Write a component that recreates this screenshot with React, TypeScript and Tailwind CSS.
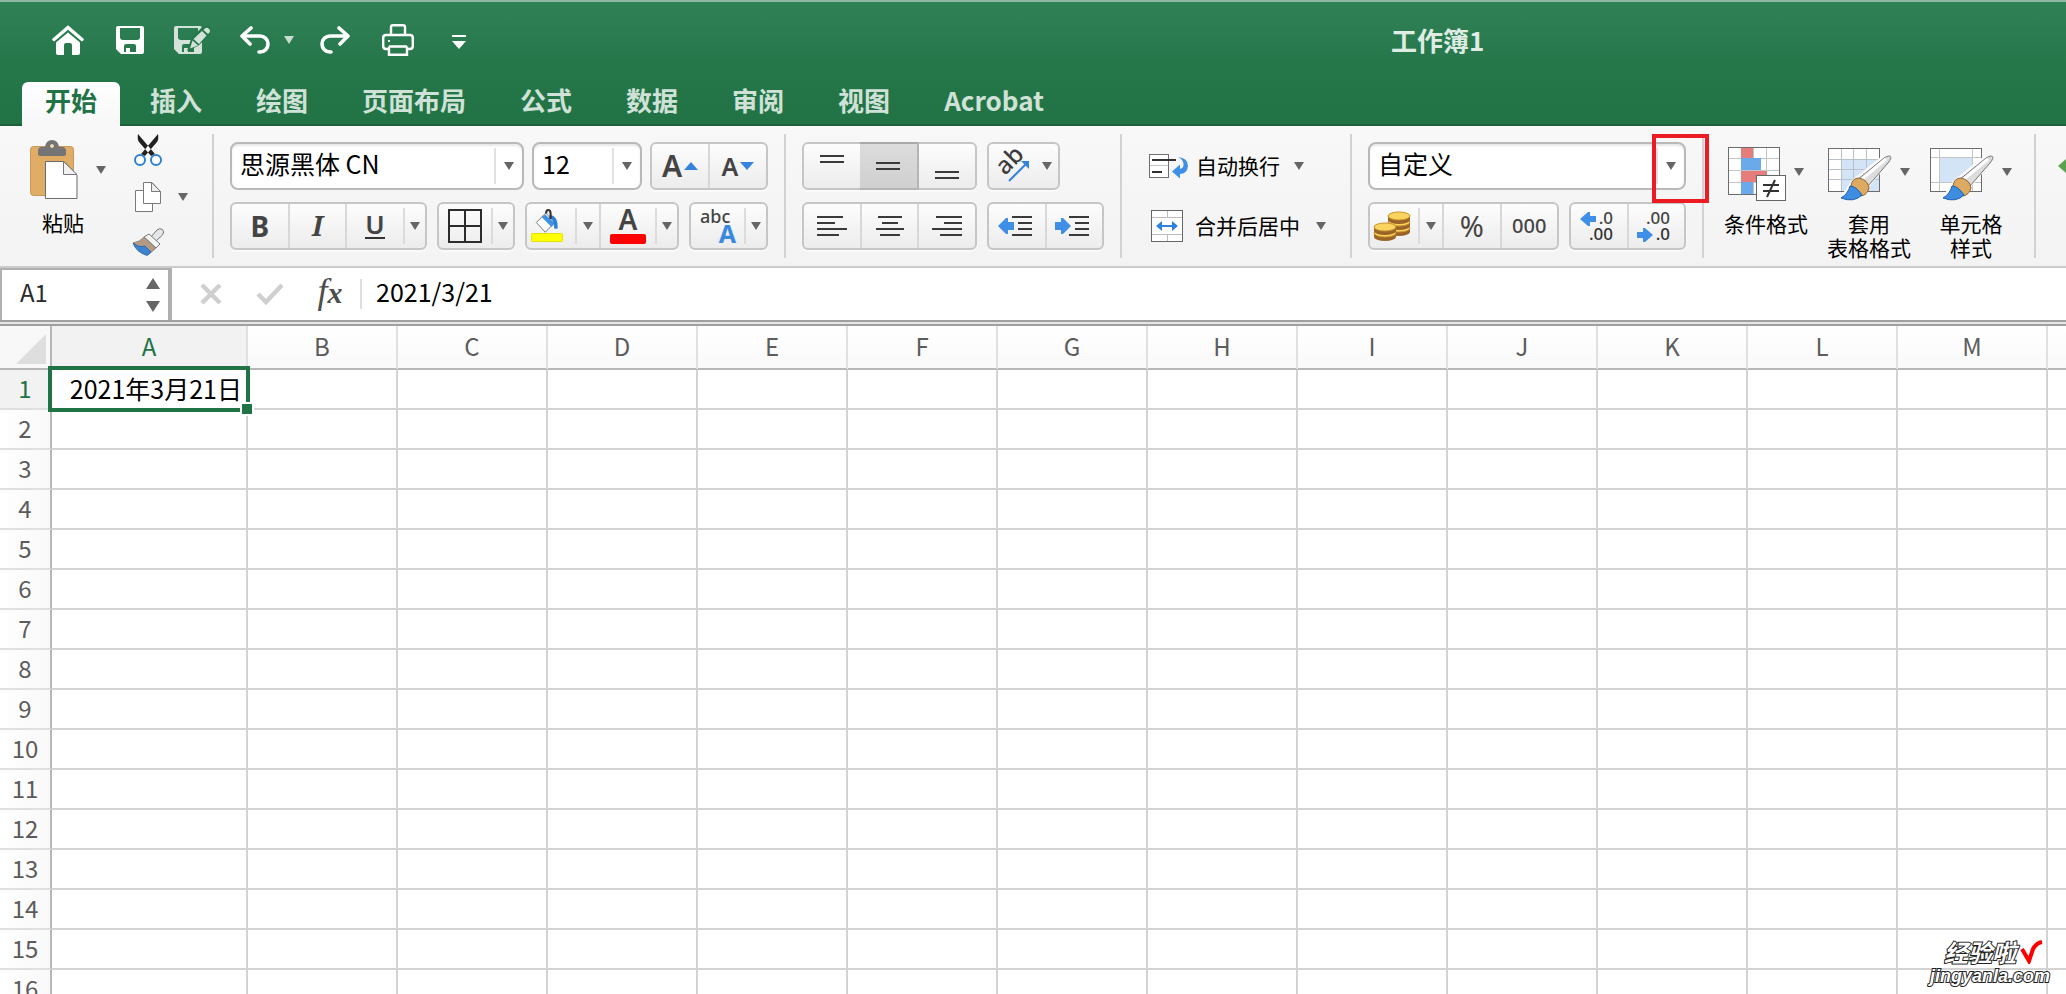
import type { ReactNode } from "react"
import clsx from "clsx"

const COLUMNS = ["A", "B", "C", "D", "E", "F", "G", "H", "I", "J", "K", "L", "M", "N"]
const ROWS = Array.from({ length: 16 }, (_, i) => i + 1)
const TABS = ["插入", "绘图", "页面布局", "公式", "数据", "审阅", "视图", "Acrobat"]

/* ---------- shared bits ---------- */

function Caret({ className = "" }: { className?: string }) {
  return (
    <svg viewBox="0 0 10 8" className={clsx("h-2 w-2.5 shrink-0", className || "text-[#666666]")} aria-hidden="true">
      <path d="M0 0H10L5 8Z" fill="currentColor" />
    </svg>
  )
}

function Divider() {
  return <div className="mt-2 h-[124px] w-0.5 shrink-0 bg-[#d2d2d2]" />
}

function Group({ className, children }: { className?: string; children: ReactNode }) {
  return (
    <div
      className={clsx(
        "flex h-12 shrink-0 rounded-md border-2 border-[#c6c6c6] bg-linear-to-b from-[#fdfdfd] to-[#ececec] shadow-[0_2px_1px_#fafafa]",
        className
      )}
    >
      {children}
    </div>
  )
}

interface SegProps {
  label: string
  className?: string
  line?: boolean
  pressed?: boolean
  children: ReactNode
}

function Seg({ label, className = "flex-1", line, pressed, children }: SegProps) {
  return (
    <button
      type="button"
      aria-label={label}
      aria-pressed={pressed}
      className={clsx(
        "flex items-center justify-center text-[#444444]",
        line && "border-l-2 border-[#d8d8d8]",
        pressed && "-my-0.5 border-y-2 border-r-2 border-t-[#a9a9a9] border-r-[#b5b5b5] border-b-[#b5b5b5] bg-linear-to-b from-[#dcdcdc] to-[#d0d0d0]",
        className
      )}
    >
      {children}
    </button>
  )
}

// narrow drop-down part of a split button, with its short rule
function SplitArrow({ label, className = "w-[22px]" }: { label: string; className?: string }) {
  return (
    <button type="button" aria-label={label} className={clsx("flex shrink-0 items-center", className)}>
      <span className="h-9 w-0.5 bg-[#dcdcdc]" />
      <span className="flex flex-1 justify-center">
        <Caret />
      </span>
    </button>
  )
}

interface ComboProps {
  label: string
  value: string
  className: string
  children?: ReactNode
}

function Combo({ label, value, className, children }: ComboProps) {
  return (
    <div className={clsx("relative h-12 shrink-0", className)}>
      <select
        aria-label={label}
        defaultValue={value}
        className="h-12 w-full appearance-none rounded-lg border-2 border-[#b9b9b9] bg-white pb-1.5 pl-2 text-[25px] leading-9 text-black shadow-[inset_0_2px_2px_#e8e8e8]"
      >
        <option>{value}</option>
      </select>
      <span className="pointer-events-none absolute inset-y-0 right-0 flex w-[30px] items-center">
        <span className="h-9 w-0.5 bg-[#e2e2e2]" />
        <span className="flex flex-1 justify-center pr-0.5">
          <Caret />
        </span>
      </span>
      {children}
    </div>
  )
}

/* ---------- title bar icons ---------- */

const FLOPPY =
  "M2 0H26Q28 0 28 2V26Q28 28 26 28H5L0 23V2Q0 0 2 0ZM4 2V11Q4 14 7 14H21Q24 14 24 11V2ZM8 26V20Q8 18 10 18H18Q20 18 20 20V26H14V22H10V26Z"

function HomeIcon() {
  return (
    <svg viewBox="0 0 32 30" className="h-[30px] w-8">
      <path d="M2 14.5L16 2.5L30 14.5" fill="none" stroke="#fff" strokeWidth="3.4" strokeLinecap="round" />
      <path d="M4 17.5L16 7.5L28 17.5V28Q28 30 26 30H20V20Q20 18 18 18H14Q12 18 12 20V30H6Q4 30 4 28Z" fill="#fff" />
    </svg>
  )
}

function SaveIcon() {
  return (
    <svg viewBox="0 0 28 28" className="size-7">
      <path d={FLOPPY} fill="#fff" fillRule="evenodd" />
    </svg>
  )
}

function SaveEditIcon() {
  return (
    <svg viewBox="0 0 36 28" className="h-7 w-9">
      <path d={FLOPPY} fill="#d3e3d9" fillRule="evenodd" />
      <path d="M13 25L17 13L29 0H38V7L24 20Z" fill="#27784a" />
      <path d="M16 22.500L18.500 14.500L24 19.500Z" fill="#d3e3d9" />
      <path d="M19.500 13L28 5L32.500 9.500L25 18Z" fill="#d3e3d9" />
      <path d="M29.500 4L31 2.500Q33 1 35 3T35 7L34 8Z" fill="#d3e3d9" />
    </svg>
  )
}

function UndoIcon({ flip }: { flip?: boolean }) {
  return (
    <svg viewBox="0 0 30 28" className={clsx("h-7 w-[30px]", flip && "-scale-x-100")}>
      <path
        d="M11 2L2 10L10 18M3 10H20A8 8 0 0 1 20 26H19"
        fill="none"
        stroke="#fff"
        strokeWidth="3.6"
        strokeLinecap="round"
        strokeLinejoin="round"
      />
    </svg>
  )
}

function PrintIcon() {
  return (
    <svg viewBox="0 0 32 32" className="size-8" fill="none" stroke="#fff" strokeWidth="2.4">
      <path d="M9 11V3Q9 1.200 11 1.200H21Q23 1.200 23 3V11" />
      <path d="M7 25H4Q1.200 25 1.200 22V14Q1.200 11 4 11H28Q30.800 11 30.800 14V22Q30.800 25 28 25H25" />
      <path d="M7 22.500H25M7 22.500V30.800H25V22.500" />
      <path d="M6 17H8" strokeWidth="2" />
    </svg>
  )
}

/* ---------- ribbon icons ---------- */

function PasteIcon() {
  return (
    <svg viewBox="0 0 48 60" className="h-[60px] w-12">
      <rect x="0.500" y="6.500" width="43" height="49" rx="3" fill="#e0ad66" stroke="#c8965a" />
      <path d="M8 11Q8 7 12 7H15Q16 0 22 0T29 7H32Q36 7 36 11V14Q36 16 33 16H11Q8 16 8 14Z" fill="#757575" />
      <circle cx="22" cy="6" r="2.500" fill="#f1d9b5" stroke="#666" />
      <path d="M15.500 21.500H34L47 35V58.500H15.500Z" fill="#fff" stroke="#6b6b6b" />
      <path d="M33.500 21.500V34.500H47Z" fill="#f1f1f1" stroke="#777" />
    </svg>
  )
}

function CutIcon() {
  return (
    <svg viewBox="0 0 28 32" className="h-8 w-7">
      <path d="M4 0Q3 5 5 8L17 22L21 20ZM24 0Q25 5 23 8L11 22L7 20Z" fill="#222" />
      <circle cx="6" cy="26" r="5" fill="#fff" stroke="#2f7fd6" strokeWidth="2" />
      <circle cx="22" cy="26" r="5" fill="#fff" stroke="#2f7fd6" strokeWidth="2" />
    </svg>
  )
}

function CopyIcon() {
  return (
    <svg viewBox="0 0 28 30" className="h-[30px] w-7" fill="#fff" stroke="#7a7a7a">
      <path d="M1.500 8.500H18.500V29.500H1.500Z" />
      <path d="M9.500 0.500H18L26.500 9.500V21.500H9.500Z" />
      <path d="M17.500 0.500V9.500H26.500Z" fill="#eee" />
    </svg>
  )
}

function FormatPainterIcon() {
  return (
    <svg viewBox="0 0 32 28" className="h-7 w-8">
      <path d="M19 9L25 2Q28 -0.500 30.500 1.500T30.500 7L24 13Z" fill="#e6e6e6" stroke="#777" />
      <path d="M12 9L17 6L28 16L24 20Z" fill="#f4f4f4" stroke="#777" />
      <path d="M12 9L24 20L16 27L1 15Q8 14 12 9Z" fill="#b29a84" stroke="#777" strokeWidth="0.800" />
      <path d="M1 15Q7 20 13 18Q17 22 19 24L15 27.500Q4 24 1 15Z" fill="#3b82d0" stroke="#2461a5" strokeWidth="0.800" />
    </svg>
  )
}

function FillIcon() {
  return (
    <svg viewBox="0 0 36 40" className="h-10 w-9">
      <path d="M16.500 5.500L27 16L16 27L6 16Z" fill="#fff" stroke="#6a6a6a" />
      <path d="M12 10L16 7L27 17L23 21Z" fill="#4391e4" />
      <path d="M21 9Q29 11 28 23" fill="none" stroke="#2f7fd6" strokeWidth="4" />
      <path d="M17 6Q17 2 19.500 2T22 6V12" fill="none" stroke="#333" strokeWidth="2.400" />
      <rect x="0.500" y="28.500" width="35" height="9" rx="1" fill="#ffff00" stroke="#dede00" />
    </svg>
  )
}

function BordersIcon() {
  return (
    <svg viewBox="0 0 34 34" className="size-[34px]">
      <path d="M1 1H33V33H1ZM17 1V33M1 17H33" fill="none" stroke="#2c2c2c" strokeWidth="2" />
    </svg>
  )
}

function Lines({ d, size = "h-[22px] w-[30px]", box = "0 0 30 22" }: { d: string; size?: string; box?: string }) {
  return (
    <svg viewBox={box} className={size}>
      <path d={d} fill="none" stroke="#3a3a3a" strokeWidth="2" />
    </svg>
  )
}

function IndentIcon({ increase }: { increase?: boolean }) {
  return (
    <svg viewBox="0 0 34 22" className="h-[22px] w-[34px]">
      <path d="M14 2H34M20 8H34M20 14H34M14 20H34" stroke="#3a3a3a" strokeWidth="2" />
      <path
        d={increase ? "M0 7H6V3L8 3L16 11L8 19H6V15H0Z" : "M16 7H10V3H8L0 11L8 19H10V15H16Z"}
        fill="#3f8fe6"
      />
    </svg>
  )
}

function OrientationIcon() {
  return (
    <svg viewBox="0 0 36 34" className="h-[34px] w-9 overflow-visible">
      <text
        x="0"
        y="0"
        transform="translate(9 27) rotate(-45)"
        fontSize="24"
        fontFamily="Noto Sans"
        fontWeight="500"
        fill="#3c3c3c"
      >
        ab
      </text>
      <path d="M13 32L30 15" stroke="#3583dc" strokeWidth="2" />
      <path d="M25 12H33V20Z" fill="#3583dc" />
    </svg>
  )
}

function WrapIcon() {
  return (
    <svg viewBox="0 0 40 26" className="h-[26px] w-10">
      <rect x="0.500" y="1.500" width="19" height="23" fill="#fff" stroke="#6e6e6e" />
      <path d="M1 12.500H19" stroke="#c4c4c4" />
      <path d="M3 7H27M3 19H13" stroke="#333" strokeWidth="2" />
      <path d="M29 4Q39 5 39 13Q38 21 31 21V25.500L23 18.500L31 11.500V16Q35 15 34.500 11Q34 6 29 4Z" fill="#3f8fe6" />
    </svg>
  )
}

function MergeIcon() {
  return (
    <svg viewBox="0 0 32 32" className="size-8">
      <rect x="0.500" y="0.500" width="31" height="31" fill="#fff" stroke="#666" />
      <path d="M1 7.500H31M1 24.500H31M16.500 1V7M16.500 25V31" stroke="#bdbdbd" />
      <path d="M5 16L11 11V15H21V11L27 16L21 21V17H11V21Z" fill="#2f82de" />
    </svg>
  )
}

function Coin({ x, y }: { x: number; y: number }) {
  return (
    <g>
      <path d={`M${x} ${y}v4a11 4 0 0 0 22 0v-4z`} fill="#9a6426" />
      <ellipse cx={x + 11} cy={y} rx="11" ry="4" fill="#fbd45f" stroke="#c8922e" />
    </g>
  )
}

function CoinsIcon() {
  return (
    <svg viewBox="0 0 38 32" className="h-8 w-[38px]">
      <Coin x={15} y={18} />
      <Coin x={15} y={12} />
      <Coin x={15} y={6} />
      <Coin x={1} y={23} />
      <Coin x={1} y={17} />
    </svg>
  )
}

function DecimalIcon({ increase }: { increase?: boolean }) {
  return (
    <svg viewBox="0 0 34 36" className="h-9 w-[34px] overflow-visible" fontSize="17" fontFamily="Noto Sans" fontWeight="500">
      <path
        d={increase ? "M16 8H10V4H8L0 11L8 18H10V14H16Z" : "M0 24H6V20H8L16 27L8 34H6V30H0Z"}
        fill="#3f8fe6"
      />
      <text x="33" y="16" textAnchor="end" fill="#444">
        {increase ? ".0" : ".00"}
      </text>
      <text x="33" y="32" textAnchor="end" fill="#333">
        {increase ? ".00" : ".0"}
      </text>
    </svg>
  )
}

function ConditionalIcon() {
  return (
    <svg viewBox="0 0 58 54" className="h-[54px] w-[58px]">
      <rect x="0.500" y="0.500" width="51" height="47" fill="#fff" stroke="#6c6c6c" />
      <path d="M1 11.500H51M1 23.500H51M1 35.500H51M13.500 1V47M25.500 1V47M38.500 1V47" stroke="#c4c4c4" />
      <path d="M13 1H25V11H13ZM13 24H39V35H13Z" fill="#e67c7c" />
      <path d="M13 11H33V23H13ZM13 35H25V47H13Z" fill="#6aa9ea" />
      <rect x="28.500" y="28.500" width="29" height="25" fill="#fff" stroke="#666" />
      <path d="M35 38H51M35 44H51M47 33L39 50" stroke="#333" strokeWidth="2" />
    </svg>
  )
}

function PaintBrush() {
  return (
    <g>
      <path d="M24 33L54 9Q60 5 63 9T60 17L41 40Q34 56 11 52Z" fill="#fafafa" />
      <path d="M29 33L56 11Q61 8 62.500 9.500T60 16L40 39Z" fill="#dcdcdc" stroke="#777" />
      <path d="M34 32L58 12" stroke="#fff" strokeWidth="3" />
      <path d="M23 39Q24 31 31 31Q40 33 41 41Q39 48 33 49Z" fill="#deaa62" stroke="#8a6638" />
      <path d="M13 51Q20 47 22 39Q28 39 34 48Q26 56 13 51Z" fill="#3f8de0" stroke="#1d61b0" />
    </g>
  )
}

function TableFormatIcon() {
  return (
    <svg viewBox="0 0 64 54" className="h-[54px] w-16">
      <rect x="0.500" y="1.500" width="51" height="43" fill="#fff" stroke="#6c6c6c" />
      <path d="M13 13H51V44H13Z" fill="#d3e4f6" />
      <path d="M1 12.500H51M1 22.500H51M1 32.500H51M13.500 2V44M25.500 2V44M38.500 2V44" stroke="#b9c2cc" />
      <PaintBrush />
    </svg>
  )
}

function CellStyleIcon() {
  return (
    <svg viewBox="0 0 64 54" className="h-[54px] w-16">
      <rect x="0.500" y="1.500" width="51" height="43" fill="#fff" stroke="#6c6c6c" />
      <path d="M1 10.500H51M1 35.500H51M9.500 2V44M42.500 2V44" stroke="#c4c4c4" />
      <path d="M10 11H42V35H10Z" fill="#d3e4f6" />
      <PaintBrush />
    </svg>
  )
}

/* ---------- page parts ---------- */

function TitleBar() {
  return (
    <header className="border-t-2 border-[#8fb8a0] bg-linear-to-b from-[#318157] via-[#25774a] to-[#217346]">
      <div className="flex h-20 items-start pl-[52px]">
        <div className="flex h-[76px] w-[418px] shrink-0 items-center">
          <button type="button" aria-label="主页" className="mr-8"><HomeIcon /></button>
          <button type="button" aria-label="保存" className="mr-[30px]"><SaveIcon /></button>
          <button type="button" aria-label="另存为" className="mr-[30px]"><SaveEditIcon /></button>
          <button type="button" aria-label="撤销" className="mr-3.5"><UndoIcon /></button>
          <button type="button" aria-label="撤销列表" className="mr-[26px]"><Caret className="text-[#c8dcd0]" /></button>
          <button type="button" aria-label="重做" className="mr-8"><UndoIcon flip /></button>
          <button type="button" aria-label="打印" className="mr-[38px]"><PrintIcon /></button>
          <button type="button" aria-label="自定义工具栏" className="pt-1">
            <svg viewBox="0 0 14 14" className="size-3.5">
              <path d="M0 0H14V2H0ZM0 6H14L7 14Z" fill="#fff" />
            </svg>
          </button>
        </div>
        <h1 className="ml-[921px] flex h-[74px] items-center text-[26px] font-bold whitespace-nowrap text-[#dfece4]">工作簿1</h1>
      </div>
      <nav className="flex h-11 pl-[22px] text-[26px] leading-9 font-bold whitespace-nowrap text-[#d0e2d7] shadow-[inset_0_-2px_0_#1c6039]">
        <a href="#home" aria-current="page" className="mr-[3px] rounded-t-md bg-linear-to-b from-white to-[#f7f7f7] px-[23px] text-[#217346]">
          开始
        </a>
        {TABS.map((tab) => (
          <a key={tab} href={`#${tab}`} className="px-[27px]">
            {tab}
          </a>
        ))}
      </nav>
    </header>
  )
}

function FontSection() {
  return (
    <section className="flex w-[570px] shrink-0 flex-col gap-3 pt-4 pl-4">
      <div className="flex">
        <Combo label="字体" value="思源黑体 CN" className="mr-2 w-[294px]" />
        <Combo label="字号" value="12" className="mr-2 w-[110px]" />
        <Group className="w-[118px]">
          <Seg label="增大字号">
            <span className="font-['Noto_Sans'] text-[30px] leading-10 font-semibold">A</span>
            <svg viewBox="0 0 14 8" className="ml-0.5 h-2 w-3.5"><path d="M0 8H14L7 0Z" fill="#3583dc" /></svg>
          </Seg>
          <Seg label="减小字号" line>
            <span className="font-['Noto_Sans'] text-[25px] leading-10 font-semibold">A</span>
            <svg viewBox="0 0 14 8" className="ml-0.5 h-2 w-3.5"><path d="M0 0H14L7 8Z" fill="#3583dc" /></svg>
          </Seg>
        </Group>
      </div>
      <div className="flex">
        <Group className="mr-2.5 w-[197px]">
          <Seg label="加粗"><span className="font-['Noto_Sans'] text-[28px] leading-10 font-bold">B</span></Seg>
          <Seg label="倾斜" line>
            <span className="font-['Noto_Serif','DejaVu_Serif','Liberation_Serif'] text-[27px] leading-10 font-bold italic">I</span>
          </Seg>
          <Seg label="下划线" line>
            <svg viewBox="0 0 22 30" className="h-[30px] w-[22px] overflow-visible">
              <text x="11" y="23" textAnchor="middle" fontSize="26" fontFamily="Noto Sans" fontWeight="600" fill="#444">
                U
              </text>
              <path d="M1 27H21" stroke="#333" strokeWidth="2" />
            </svg>
          </Seg>
          <SplitArrow label="下划线选项" />
        </Group>
        <Group className="mr-2.5 w-[78px]">
          <Seg label="边框"><BordersIcon /></Seg>
          <SplitArrow label="边框选项" />
        </Group>
        <Group className="mr-2.5 w-[154px]">
          <Seg label="填充颜色" className="w-12 pr-3 pl-1"><FillIcon /></Seg>
          <SplitArrow label="填充颜色选项" className="w-6" />
          <Seg label="字体颜色" line>
            <svg viewBox="0 0 36 40" className="h-10 w-9 overflow-visible">
              <text x="18" y="24" textAnchor="middle" fontSize="28" fontFamily="Noto Sans" fontWeight="600" fill="#444">
                A
              </text>
              <rect y="28" width="36" height="10" rx="2" fill="#ff0000" />
            </svg>
          </Seg>
          <SplitArrow label="字体颜色选项" />
        </Group>
        <Group className="w-[79px]">
          <Seg label="拼音指南">
            <svg viewBox="0 0 36 40" className="h-10 w-9 overflow-visible" fontFamily="Noto Sans">
              <text x="0" y="17" fontSize="18" fontWeight="500" fill="#444">
                abc
              </text>
              <text x="36" y="37" textAnchor="end" fontSize="25" fontWeight="700" fill="#3a88e0">
                A
              </text>
            </svg>
          </Seg>
          <SplitArrow label="拼音选项" />
        </Group>
      </div>
    </section>
  )
}

function AlignSection() {
  return (
    <section className="flex w-[334px] shrink-0 flex-col gap-3 pt-4 pl-4">
      <div className="flex gap-2.5">
        <Group className="w-[175px]">
          <Seg label="顶端对齐"><Lines d="M3 3H27M3 9H27" size="h-[38px] w-[30px]" box="0 -6 30 38" /></Seg>
          <Seg label="垂直居中" pressed><Lines d="M3 8H27M3 14H27" /></Seg>
          <Seg label="底端对齐"><Lines d="M3 21H27M3 27H27" size="h-[38px] w-[30px]" box="0 -4 30 38" /></Seg>
        </Group>
        <Group className="w-[73px]">
          <Seg label="方向">
            <OrientationIcon />
            <Caret className="ml-2.5 text-[#666666]" />
          </Seg>
        </Group>
      </div>
      <div className="flex gap-2.5">
        <Group className="w-[175px]">
          <Seg label="左对齐"><Lines d="M0 2H26M0 8H18M0 14H30M0 20H22" /></Seg>
          <Seg label="居中" line><Lines d="M3 2H27M7 8H23M1 14H29M5 20H25" /></Seg>
          <Seg label="右对齐" line><Lines d="M4 2H30M12 8H30M0 14H30M8 20H30" /></Seg>
        </Group>
        <Group className="w-[117px]">
          <Seg label="减少缩进" className="flex-1 pr-1"><IndentIcon /></Seg>
          <Seg label="增加缩进" className="flex-1 pr-1" line><IndentIcon increase /></Seg>
        </Group>
      </div>
    </section>
  )
}

function NumberSection() {
  return (
    <section className="flex w-[350px] shrink-0 flex-col gap-3 pt-4 pl-4">
      <Combo label="数字格式" value="自定义" className="w-[318px]">
        <span className="pointer-events-none absolute -top-2 -right-[23px] h-[69px] w-[57px] border-4 border-[#ed1c24]" />
      </Combo>
      <div className="flex gap-2.5">
        <Group className="w-[191px]">
          <Seg label="货币" className="w-12 pr-1"><CoinsIcon /></Seg>
          <SplitArrow label="货币选项" className="w-6" />
          <Seg label="百分比" line><span className="font-['Noto_Sans'] text-[29px] leading-10">%</span></Seg>
          <Seg label="千位分隔" line><span className="font-['Noto_Sans'] text-[20px] leading-10 font-medium">000</span></Seg>
        </Group>
        <Group className="w-[117px]">
          <Seg label="增加小数位" className="flex-1 pr-1"><DecimalIcon increase /></Seg>
          <Seg label="减少小数位" className="flex-1 pr-1" line><DecimalIcon /></Seg>
        </Group>
      </div>
    </section>
  )
}

function StyleButton({ icon, lines, className }: { icon: ReactNode; lines: string[]; className?: string }) {
  return (
    <button type="button" className={clsx("flex flex-col items-center", className)}>
      <span className="mb-2.5 flex items-center gap-2">
        {icon}
        <Caret className="mb-1 text-[#666666]" />
      </span>
      {lines.map((line) => (
        <span key={line}>{line}</span>
      ))}
    </button>
  )
}

function Ribbon() {
  return (
    <div className="flex h-[142px] overflow-hidden border-b-2 border-[#cbcbcb] bg-linear-to-b from-[#f8f8f8] to-[#f3f3f3] text-[21px] leading-6 whitespace-nowrap text-black">
      <section className="flex w-[212px] shrink-0 items-start pl-[30px]">
        <button type="button" className="mr-[26px] flex flex-col items-start pt-3.5">
          <span className="mb-2.5 flex items-center gap-[18px]">
            <PasteIcon />
            <Caret />
          </span>
          <span className="pl-3">粘贴</span>
        </button>
        <div className="flex flex-col gap-4 pt-2">
          <button type="button" aria-label="剪切" className="pl-0.5"><CutIcon /></button>
          <button type="button" aria-label="复制" className="flex items-center gap-4 pl-0.5">
            <CopyIcon />
            <Caret />
          </button>
          <button type="button" aria-label="格式刷"><FormatPainterIcon /></button>
        </div>
      </section>
      <Divider />
      <FontSection />
      <Divider />
      <AlignSection />
      <Divider />
      <section className="flex w-[228px] shrink-0 flex-col gap-3 pt-4 pl-[27px]">
        <button type="button" className="flex h-12 items-center">
          <WrapIcon />
          <span className="mr-3.5 ml-[7px] pb-0.5">自动换行</span>
          <Caret />
        </button>
        <button type="button" className="flex h-12 items-center pl-0.5">
          <MergeIcon />
          <span className="mr-4 ml-3 pb-0.5">合并后居中</span>
          <Caret />
        </button>
      </section>
      <Divider />
      <NumberSection />
      <Divider />
      <section className="flex w-[330px] shrink-0 items-start pt-[21px] pl-5">
        <StyleButton icon={<ConditionalIcon />} lines={["条件格式"]} className="mr-[19px]" />
        <StyleButton icon={<TableFormatIcon />} lines={["套用", "表格格式"]} className="mr-[19px]" />
        <StyleButton icon={<CellStyleIcon />} lines={["单元格", "样式"]} />
      </section>
      <Divider />
      <svg viewBox="0 0 18 36" className="mt-[22px] ml-[22px] h-9 w-[18px] shrink-0">
        <path d="M0 18L18 2V34Z" fill="#5aa152" />
      </svg>
    </div>
  )
}

function FormulaBar() {
  return (
    <div className="flex h-[52px] items-stretch bg-white text-2xl">
      <div className="flex w-[172px] shrink-0 border-2 border-r-4 border-b-0 border-[#b0b0b0]">
        <input aria-label="名称框" defaultValue="A1" className="w-36 pb-1.5 pl-[18px] text-[#2b2b2b] outline-none" />
        <div className="flex flex-col justify-center gap-3 text-[#666666]">
          <button type="button" aria-label="上一个">
            <svg viewBox="0 0 14 11" className="h-[11px] w-3.5"><path d="M0 11H14L7 0Z" fill="currentColor" /></svg>
          </button>
          <button type="button" aria-label="下一个">
            <svg viewBox="0 0 14 11" className="h-[11px] w-3.5"><path d="M0 0H14L7 11Z" fill="currentColor" /></svg>
          </button>
        </div>
      </div>
      <div className="flex flex-1 items-center pl-7">
        <button type="button" aria-label="取消" className="mr-[34px]">
          <svg viewBox="0 0 22 22" className="size-[22px]">
            <path d="M2 2L20 20M20 2L2 20" stroke="#cfcfcf" strokeWidth="4.500" />
          </svg>
        </button>
        <button type="button" aria-label="输入" className="mr-8">
          <svg viewBox="0 0 28 22" className="h-[22px] w-7">
            <path d="M2 11L10 19L26 2" fill="none" stroke="#cfcfcf" strokeWidth="4.500" />
          </svg>
        </button>
        <button
          type="button"
          aria-label="插入函数"
          className="mr-4 w-7 pb-1 font-['Liberation_Serif'] text-[36px] leading-10 text-[#4d4d4d] italic"
        >
          f<span className="text-[30px] font-bold">x</span>
        </button>
        <span className="h-[30px] w-0.5 bg-[#dedede]" />
        <input aria-label="编辑栏" defaultValue="2021/3/21" className="ml-3.5 flex-1 pb-1 text-[25px] text-black outline-none" />
      </div>
    </div>
  )
}

function Sheet() {
  return (
    <table className="w-[2198px] table-fixed border-separate border-spacing-0 bg-white text-2xl leading-8 text-[#5c5c5c]">
      <colgroup>
        <col className="w-[52px]" />
        <col className="w-[196px]" />
        {COLUMNS.slice(1).map((c) => (
          <col key={c} className="w-[150px]" />
        ))}
      </colgroup>
      <thead>
        <tr className="h-11">
          <th className="border-r-2 border-b-2 border-[#b8b8b8] bg-[#f8f8f8] p-0">
            <svg viewBox="0 0 50 42" className="h-[42px] w-[50px]">
              <path d="M46 8V38H16Z" fill="#dedede" />
            </svg>
          </th>
          {COLUMNS.map((c) => (
            <th
              key={c}
              scope="col"
              className={clsx(
                "border-r-2 border-b-2 border-r-[#e0e0e0] border-b-[#b8b8b8] p-0 pb-0.5 font-normal",
                c === "A" ? "bg-[#f2f2f2] text-[#217346]" : "bg-linear-to-b from-white to-[#f9f9f9]"
              )}
            >
              {c}
            </th>
          ))}
        </tr>
      </thead>
      <tbody>
        {ROWS.map((r) => (
          <tr key={r} className="h-10">
            <th
              scope="row"
              className={clsx(
                "border-r-2 border-b-2 border-r-[#b8b8b8] border-b-[#e0e0e0] p-0 pb-0.5 font-normal",
                r === 1 ? "bg-[#f2f2f2] text-[#217346]" : "bg-linear-to-r from-white to-[#f9f9f9]"
              )}
            >
              {r}
            </th>
            {COLUMNS.map((c) =>
              r === 1 && c === "A" ? (
                <td key={c} className="relative border-r-2 border-b-2 border-[#d3d3d3] p-0 pr-1 pb-0.5 text-right text-[25px] text-black">
                  2021年3月21日
                  <span className="absolute -inset-1 border-4 border-[#217346]" />
                  <span className="absolute -right-2 -bottom-2 size-3.5 border-2 border-white bg-[#217346]" />
                </td>
              ) : (
                <td key={c} className="border-r-2 border-b-2 border-[#d3d3d3] p-0" />
              )
            )}
          </tr>
        ))}
      </tbody>
    </table>
  )
}

function Watermark() {
  return (
    <div className="pointer-events-none absolute right-4 bottom-2 flex flex-col items-end font-bold whitespace-nowrap text-white italic [-webkit-text-stroke:2px_#222222] [paint-order:stroke_fill]">
      <span className="flex items-center gap-1 pr-1.5 text-2xl leading-7">
        经验啦
        <svg viewBox="0 0 24 24" className="size-6">
          <path d="M2 9L9 21L13 9Q16 3 22 2" fill="none" stroke="#ff0000" strokeWidth="4" />
        </svg>
      </span>
      <span className="font-['Liberation_Sans'] text-lg leading-5">jingyanla.com</span>
    </div>
  )
}

export default function App() {
  return (
    <div className="relative h-screen overflow-hidden bg-white font-['Noto_Sans_CJK_SC',sans-serif]">
      <TitleBar />
      <Ribbon />
      <FormulaBar />
      <div className="h-1.5 border-y-2 border-t-[#a0a0a0] border-b-[#a0a0a0] bg-[#e6e6e6]" />
      <Sheet />
      <Watermark />
    </div>
  )
}
